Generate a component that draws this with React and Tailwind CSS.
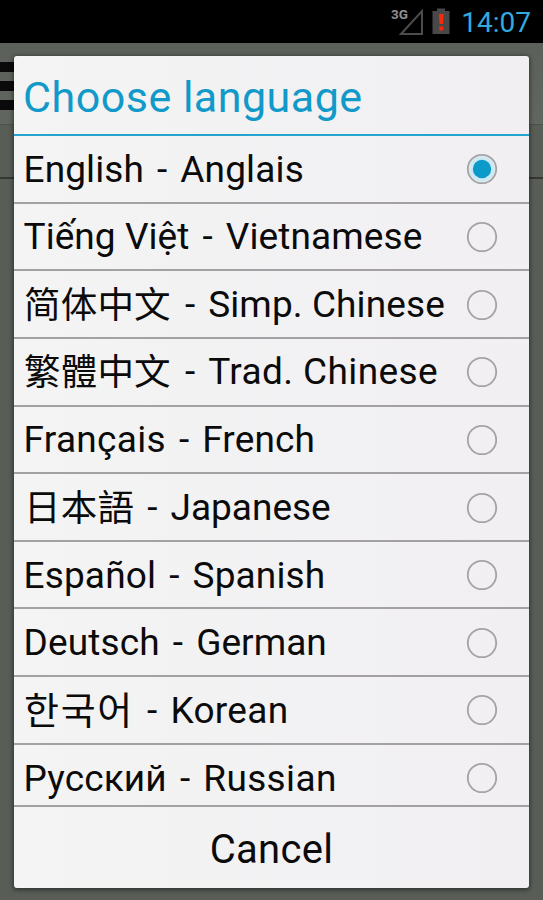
import React, { useState } from 'react';

const languages = [
  { id: 'en', native: 'English', name: 'Anglais', nativeClass: 'tracking-[0.1px]', nameClass: 'tracking-[0.15px]' },
  { id: 'vi', native: 'Tiếng Việt', name: 'Vietnamese', nativeClass: 'tracking-[0.05px]', nameClass: 'tracking-[0.1px]' },
  { id: 'zh-CN', native: '简体中文', name: 'Simp. Chinese', nativeClass: 'ml-[0.5px] mr-px inline-block translate-y-[1px] text-[36.5px] tracking-[0.2px]', nameClass: 'tracking-[0.1px]' },
  { id: 'zh-TW', native: '繁體中文', name: 'Trad. Chinese', nativeClass: 'ml-[0.5px] mr-px inline-block translate-y-[1px] text-[36.5px] tracking-[0.2px]', nameClass: 'tracking-[0.4px]' },
  { id: 'fr', native: 'Français', name: 'French', nativeClass: 'tracking-[0.3px]', nameClass: 'tracking-[0.15px]' },
  { id: 'ja', native: '日本語', name: 'Japanese', nativeClass: 'ml-[0.5px] inline-block translate-y-[0.5px] text-[36.5px] tracking-[0.2px]', nameClass: 'tracking-[0px]' },
  { id: 'es', native: 'Español', name: 'Spanish', nativeClass: 'tracking-[0.15px]', nameClass: 'tracking-[0.15px]' },
  { id: 'de', native: 'Deutsch', name: 'German', nativeClass: 'tracking-[0.15px]', nameClass: 'tracking-[0.05px]' },
  { id: 'ko', native: '한국어', name: 'Korean', nativeClass: 'ml-[0.5px] inline-block translate-y-[0.5px] text-[38px] tracking-[1.7px]', nameClass: 'tracking-[0.3px]' },
  { id: 'ru', native: 'Русский', name: 'Russian', nativeClass: 'tracking-[0.15px]', nameClass: 'tracking-[0.35px]' },
];

function StatusBar() {
  return (
    <div className="flex h-[43px] items-center justify-end bg-black pr-[12px]">
      <svg width="34" height="30" viewBox="0 0 34 30" className="mr-[9px]">
        <path d="M12 27 L33 4 V27 Z" fill="none" stroke="#4c4c4c" strokeWidth="2" />
        <text x="2" y="12" fill="#909090" fontSize="13.5" fontWeight="700" fontFamily="Roboto, sans-serif">
          3G
        </text>
      </svg>
      <svg width="18" height="27" viewBox="0 0 18 27" className="mr-[11px]">
        <path d="M5 0.5 h8 v2.5 h4.5 v23 h-17 v-23 h4.5 z" fill="#484848" />
        <path d="M6.8 6 h4.8 l-0.7 10 h-3.4 z M7.2 18.5 h4 v4 h-4 z" fill="#f8290c" />
      </svg>
      <span className="pt-[3px] text-[28px] leading-none text-[#33a9dc]">14:07</span>
    </div>
  );
}

function Radio({ checked }) {
  return (
    <svg width="32" height="32" viewBox="0 0 32 32" className="shrink-0">
      {checked && <circle cx="16" cy="16" r="13" fill="#cfe9f3" />}
      <circle cx="16" cy="16" r="14.2" fill="none" stroke="#a5a3a5" strokeWidth="1.8" />
      {checked && <circle cx="16" cy="16" r="9.2" fill="#0c9acb" />}
    </svg>
  );
}

export default function App() {
  const [selected, setSelected] = useState('en');

  return (
    <div className="relative h-[900px] w-[543px] overflow-hidden bg-[#585d56] font-['Roboto','Noto_Sans_CJK_SC',sans-serif]">
      <StatusBar />

      {/* Dimmed page behind the dialog */}
      <div className="flex h-[82px] flex-col gap-[9px] border-b border-[#4c504b] bg-linear-to-b from-[#5c605a] to-[#626660] pt-[19px]">
        <div className="h-[10px] w-[20px] bg-[#090a09]" />
        <div className="h-[10px] w-[20px] bg-[#090a09]" />
        <div className="h-[10px] w-[20px] bg-[#090a09]" />
      </div>
      <div className="h-[54px] border-b-2 border-[#343734]" />

      {/* Dialog */}
      <div className="absolute left-[14px] top-[56px] flex h-[832px] w-[515px] flex-col overflow-hidden rounded-[3px] bg-linear-to-r from-[#f4f4f4] to-[#f1eff2] shadow-[0_1px_4px_1px_rgba(0,0,0,0.45)]">
        <div className="flex h-[80px] shrink-0 items-center border-b-[2px] border-[#23a5cf] px-[9px] pt-[4px]">
          <h1 className="whitespace-nowrap text-[43px] leading-none tracking-[0.5px] text-[#1199c9]">
            Choose language
          </h1>
        </div>

        <div className="h-[669px] shrink-0 overflow-hidden">
          {languages.map((lang) => (
            <button
              key={lang.id}
              onClick={() => setSelected(lang.id)}
              className="flex h-[67.65px] w-full items-center justify-between border-b-2 border-[#a3a1a3] pl-[9.5px] pr-[31px] pt-[1px] text-left"
            >
              <span className="whitespace-nowrap text-[37px] leading-none text-[#0b0b0b]">
                <span className={lang.nativeClass}>{lang.native}</span>
                <span className="[word-spacing:3.9px]">{' - '}</span>
                <span className={lang.nameClass}>{lang.name}</span>
              </span>
              <Radio checked={selected === lang.id} />
            </button>
          ))}
        </div>

        <button className="flex flex-1 items-center justify-center border-t-2 border-[#a3a1a3] pt-[4px] text-[40px] leading-none tracking-[0.3px] text-[#0b0b0b]">
          Cancel
        </button>
      </div>
    </div>
  );
}
